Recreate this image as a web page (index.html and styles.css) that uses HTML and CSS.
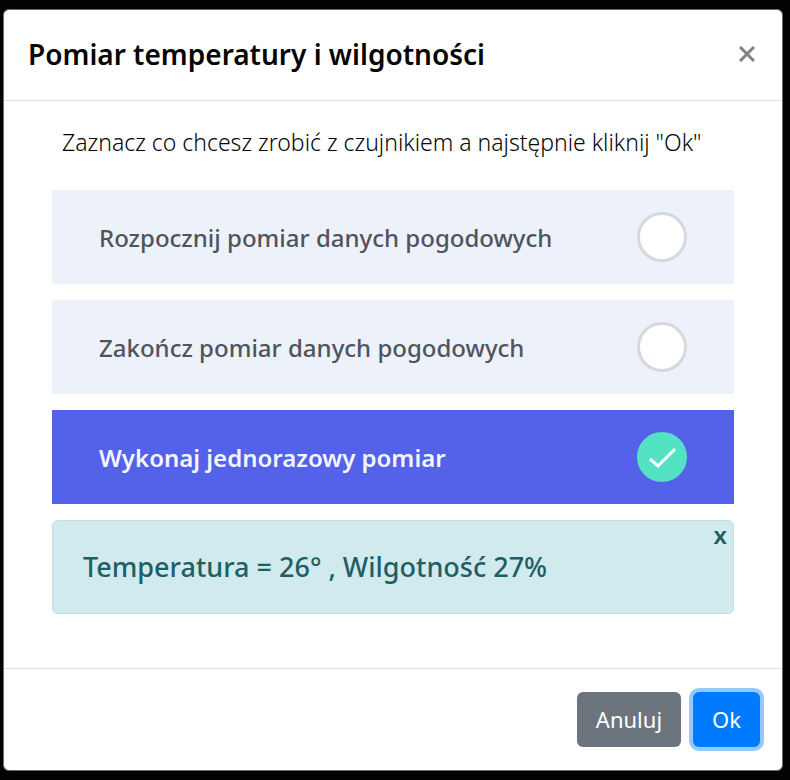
FILE: index.html
```html
<!DOCTYPE html>
<html lang="pl">
<head>
<meta charset="utf-8">
<meta name="viewport" content="width=device-width, initial-scale=1">
<title>Pomiar temperatury i wilgotności</title>
<link rel="stylesheet" href="styles.css">
</head>
<body>
<form class="modal" role="dialog" aria-labelledby="modal-title">
  <header class="modal-header">
    <h1 class="modal-title" id="modal-title">Pomiar temperatury i wilgotności</h1>
    <button class="close" type="button" aria-label="Zamknij">
      <svg class="close-icon" viewBox="0 0 16 16" aria-hidden="true"><path d="M1 1 15 15M15 1 1 15"/></svg>
    </button>
  </header>
  <main class="modal-body">
    <p class="intro">Zaznacz co chcesz zrobić z czujnikiem a najstępnie kliknij "Ok"</p>
    <label class="option">
      <span class="option-text">Rozpocznij pomiar danych pogodowych</span>
      <span class="mark">
        <input class="radio" type="radio" name="action" value="start">
        <svg class="check" viewBox="0 0 50 50" aria-hidden="true"><path d="M13 27 21 34 38 17"/></svg>
      </span>
    </label>
    <label class="option">
      <span class="option-text">Zakończ pomiar danych pogodowych</span>
      <span class="mark">
        <input class="radio" type="radio" name="action" value="stop">
        <svg class="check" viewBox="0 0 50 50" aria-hidden="true"><path d="M13 27 21 34 38 17"/></svg>
      </span>
    </label>
    <label class="option">
      <span class="option-text">Wykonaj jednorazowy pomiar</span>
      <span class="mark">
        <input class="radio" type="radio" name="action" value="single" checked>
        <svg class="check" viewBox="0 0 50 50" aria-hidden="true"><path d="M13 27 21 34 38 17"/></svg>
      </span>
    </label>
    <div class="result" role="status">
      <span class="result-text">Temperatura = 26° , Wilgotność 27%</span>
      <button class="dismiss" type="button">x</button>
    </div>
  </main>
  <footer class="modal-footer">
    <button class="btn btn-secondary" type="button">Anuluj</button>
    <button class="btn btn-primary" type="submit">Ok</button>
  </footer>
</form>
</body>
</html>
```
FILE: styles.css
```css
* {
  box-sizing: border-box;
}

body {
  margin: 0;
  min-height: 100vh;
  padding: 9px 7px 9px 3px;
  background: #020303;
  color: #050505;
  font-family: "Noto Sans", "Open Sans", sans-serif;
}

button {
  font-family: inherit;
  cursor: pointer;
}

.modal {
  background: #fff;
  border: 1px solid #6b6b6b;
  border-radius: 6px;
}

.modal-header {
  display: flex;
  align-items: center;
  justify-content: space-between;
  padding: 26px 27px 28px 24px;
  border-bottom: 1px solid #dee2e6;
}

.modal-title {
  margin: 0;
  font-size: 28px;
  line-height: 36px;
  font-weight: 600;
}

.close {
  display: flex;
  padding: 0;
  border: 0;
  background: none;
}

.close-icon {
  width: 16px;
  height: 16px;
  fill: none;
  stroke: #808080;
  stroke-width: 3;
}

.modal-body {
  display: flex;
  flex-direction: column;
  gap: 16px;
  padding: 23px 48px 54px;
}

.intro {
  margin: 0 0 14px;
  padding-left: 10px;
  font-size: 23px;
  line-height: 36px;
  font-weight: 300;
}

.option {
  display: flex;
  align-items: center;
  justify-content: space-between;
  padding: 22px 47px;
  background: #ecf1fa;
  color: #50545c;
  font-size: 24px;
  font-weight: 500;
  cursor: pointer;
}

.option:has(.radio:checked) {
  background: #5461e9;
  color: #f3f5ff;
  font-weight: 600;
}

.mark {
  display: grid;
}

.radio,
.check {
  grid-area: 1 / 1;
  width: 50px;
  height: 50px;
  margin: 0;
}

.radio {
  appearance: none;
  border: 3px solid #d5d8dc;
  border-radius: 50%;
  background: #fff;
}

.radio:checked {
  border-color: #53e2c3;
  background: #53e2c3;
}

.check {
  display: none;
  fill: none;
  stroke: #fff;
  stroke-width: 3;
  pointer-events: none;
}

.radio:checked + .check {
  display: block;
}

.result {
  display: flex;
  align-items: flex-start;
  justify-content: space-between;
  padding: 0 6px 28px 30px;
  border: 1px solid #bee0e5;
  border-radius: 6px;
  background: #d1eaee;
  color: #1c5f66;
}

.result-text {
  padding-top: 28px;
  font-size: 27px;
  line-height: 36px;
  font-weight: 500;
}

.dismiss {
  padding: 0;
  border: 0;
  background: none;
  color: inherit;
  font-size: 24px;
  line-height: 28px;
  font-weight: 600;
}

.modal-footer {
  display: flex;
  justify-content: flex-end;
  gap: 12px;
  padding: 23px 22px;
  border-top: 1px solid #dee2e6;
}

.btn {
  padding: 10px 19px;
  border: 0;
  border-radius: 6px;
  color: #fff;
  font-size: 22px;
  line-height: 35px;
}

.btn-secondary {
  background: #6c757d;
}

.btn-primary {
  background: #007bff;
  box-shadow: 0 0 0 4px #92c9ff;
}
```
